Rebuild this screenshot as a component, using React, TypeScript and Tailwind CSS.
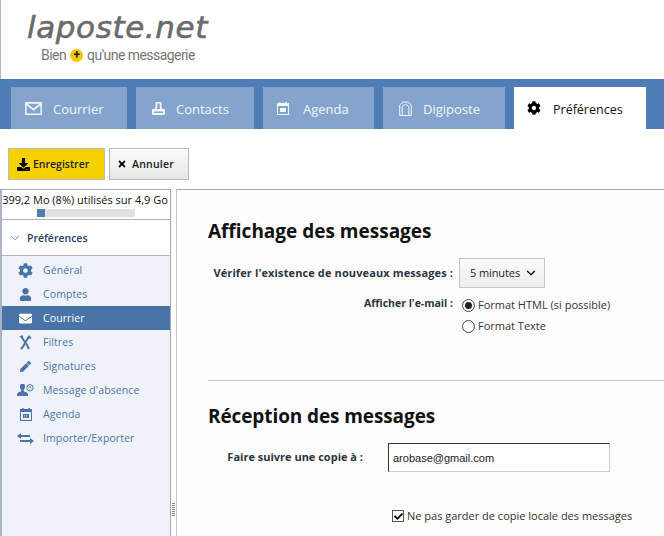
import React from "react";
import { LuChevronDown } from "react-icons/lu";
import { FaCog, FaUser, FaEnvelope, FaPen, FaDownload, FaTimes, FaCheck } from "react-icons/fa";

const sans = "font-['Open_Sans','Noto_Sans',sans-serif]";

function MailIcon({ className = "" }: { className?: string }) {
  return (
    <svg viewBox="0 0 18 14" className={className}>
      <path fillRule="evenodd" fill="currentColor" d="M0 0h18v14H0zM2.500 1.800 9 7l6.500-5.200zM1.600 3.400v8.900h14.800V3.400L9 9.300z" />
    </svg>
  );
}
function ContactIcon({ className = "" }: { className?: string }) {
  return (
    <svg viewBox="0 0 13 13" className={className}>
      <path fillRule="evenodd" fill="currentColor" d="M4.500 0h4a1 1 0 0 1 1 1v4l.8 2H12a1 1 0 0 1 1 1v4a1 1 0 0 1-1 1H1a1 1 0 0 1-1-1V8a1 1 0 0 1 1-1h1.700l.8-2V1a1 1 0 0 1 1-1zM5.300 1.600v3.600L4.600 7h3.800l-.7-1.800V1.600zM2 9.500v1.500h9V9.500z" />
    </svg>
  );
}
function CalIcon({ className = "" }: { className?: string }) {
  return (
    <svg viewBox="0 0 12 13" className={className}>
      <path fillRule="evenodd" fill="currentColor" d="M0 1h2V0h1.500v1h5V0H10v1h2v12H0zM1 4v8h10V4zM3 6h6v4H3z" />
      <path fill="#ffffff" opacity="0.6" d="M4 7h1v1H4zM6 7h1v1H6zM4 8.500h1v1H4zM6 8.500h1v1H6z" />
    </svg>
  );
}
function DigiIcon({ className = "" }: { className?: string }) {
  return (
    <svg viewBox="0 0 13 15" fill="none" stroke="currentColor" strokeWidth="1" className={className}>
      <path d="M.7 14.500V4L4 1h5l3.300 3v10.500z" />
      <path d="M3.200 14.500V5.500L6.500 3.200l3.300 2.300v9" />
    </svg>
  );
}
function FilterIcon({ className = "" }: { className?: string }) {
  return (
    <svg viewBox="0 0 13 15" className={className} fill="none" stroke="currentColor" strokeWidth="2">
      <path d="M2 14 4.500 11 6.500 7 9.500 2.500M2.500 1.500 4.500 5 8 10l2 4" />
      <path fill="currentColor" stroke="none" d="M10 0l3 3.500H7.500zM0 1.500 3.500 0l.5 3.500z" />
    </svg>
  );
}
function AbsenceIcon({ className = "" }: { className?: string }) {
  return (
    <svg viewBox="0 0 17 12" className={className}>
      <path fill="currentColor" d="M4 0h3c.6 0 1 1.200 1 3 0 2-1.300 2.800-1.300 3.800C6.700 8 11 8 11 10.500V12H0v-1.500C0 8 4.300 8 4.300 6.800 4.300 5.800 3 5 3 3c0-1.800.4-3 1-3z" />
      <circle cx="13" cy="3.800" r="3.200" fill="none" stroke="currentColor" strokeWidth="1" />
      <path d="M13 1.800v2.200h1.600" fill="none" stroke="currentColor" strokeWidth="0.800" />
    </svg>
  );
}
function SwapIcon({ className = "" }: { className?: string }) {
  return (
    <svg viewBox="0 0 17 11" className={className}>
      <path fill="currentColor" d="M4 0v2h9v2H4v2L0 3zM13 5v2H3v2h10v2l4-3z" />
    </svg>
  );
}

const tabs = [
  { label: "Courrier", icon: <MailIcon className="w-[17px] h-[13px]" />, w: "w-[116px]", gap: "gap-[11px]", pl: "pl-[14px]" },
  { label: "Contacts", icon: <ContactIcon className="w-[13px] h-[13px]" />, w: "w-[118px]", gap: "gap-[11px]", pl: "pl-[16px]" },
  { label: "Agenda", icon: <CalIcon className="w-[12px] h-[13px]" />, w: "w-[111px]", gap: "gap-[14px]", pl: "pl-[14px]" },
  { label: "Digiposte", icon: <DigiIcon className="w-[13px] h-[15px]" />, w: "w-[122px]", gap: "gap-[11px]", pl: "pl-[16px]" },
];

const items = [
  { label: "Général", icon: <FaCog className="w-[15px] h-[15px]" /> },
  { label: "Comptes", icon: <FaUser className="w-[13px] h-[13px]" /> },
  { label: "Courrier", icon: <FaEnvelope className="w-[13px] h-[13px]" />, active: true },
  { label: "Filtres", icon: <FilterIcon className="w-[13px] h-[15px]" /> },
  { label: "Signatures", icon: <FaPen className="w-[11px] h-[11px]" /> },
  { label: "Message d'absence", icon: <AbsenceIcon className="w-[17px] h-[12px]" /> },
  { label: "Agenda", icon: <CalIcon className="w-[12px] h-[13px]" /> },
  { label: "Importer/Exporter", icon: <SwapIcon className="w-[17px] h-[11px]" /> },
];

export default function App() {
  return (
    <div className={`w-[664px] h-[536px] overflow-hidden bg-white flex flex-col ${sans}`}>
      <header className="h-[79px] shrink-0 pl-[26px] pt-[9px] border-l border-l-[#a9bbd3]">
        <div className="font-['DejaVu_Sans',sans-serif] italic text-[31px] leading-[36px] tracking-[0.6px] text-[#6b6b6b] [-webkit-text-stroke:0.6px_#6b6b6b]">laposte.net</div>
        <div className="flex items-center pl-[14px] mt-[2px] font-['Roboto',sans-serif] text-[14px] leading-[16px] text-[#777] tracking-[-0.55px]">
          <span>Bien</span>
          <span className="mx-[4px] w-[13px] h-[13px] rounded-full bg-[#f4c800] flex items-center justify-center text-[#222] font-bold text-[12px] leading-none">+</span>
          <span>qu'une messagerie</span>
        </div>
      </header>

      <nav className="h-[50px] shrink-0 bg-[#4f7db5] flex items-end pl-[11px] gap-[9px]">
        {tabs.map((t) => (
          <div key={t.label} className={`${t.w} ${t.pl} ${t.gap} h-[42px] bg-[#84a4cd] text-[#f2f6fb] flex items-center text-[13px]`}>
            {t.icon}
            <span className="pt-[4px]">{t.label}</span>
          </div>
        ))}
        <div className="w-[132px] h-[42px] bg-white text-[#111] flex items-center pl-[13px] gap-[12px] text-[12.500px]">
          <FaCog className="w-[14px] h-[14px] text-black" />
          <span className="pt-[4px]">Préférences</span>
        </div>
      </nav>

      <div className="h-[60px] shrink-0 flex items-start pt-[19px] pl-[8px] gap-[4px]">
        <button className="w-[97px] h-[32px] border border-[#bbb] bg-[#f5d200] flex items-center pl-[8px] gap-[3px] text-[10.500px] font-semibold text-[#222]">
          <FaDownload className="w-[13px] h-[13px] text-black" />
          <span className="pt-[2px]">Enregistrer</span>
        </button>
        <button className="w-[80px] h-[32px] border border-[#bbb] bg-gradient-to-b from-[#fbfbfb] to-[#e6e8e8] flex items-center pl-[7px] gap-[5px] text-[10.500px] tracking-[0.2px] font-semibold text-[#222]">
          <FaTimes className="w-[10px] h-[10px] text-black" />
          <span className="pt-[2px]">Annuler</span>
        </button>
      </div>

      <div className="flex-1 flex min-h-0">
        <aside className="w-[171px] shrink-0 border-t border-t-[#aaa] border-r border-r-[#a8a8a8] border-l-2 border-l-[#a9b4c4] flex flex-col">
          <div className="h-[30px] shrink-0 border-b border-b-[#b4b4b4] flex flex-col items-center">
            <div className="text-[11px] leading-[15px] pt-[2px] pr-[2px] text-[#111] whitespace-nowrap">399,2 Mo (8%) utilisés sur 4,9 Go</div>
            <div className="w-[98px] h-[8px] bg-[#e0e2e2] mt-[2px]">
              <div className="w-[8px] h-[8px] bg-[#4f7db5]" />
            </div>
          </div>
          <div className="h-[36px] shrink-0 border-b border-b-[#b4b4b4] flex items-center pl-[6px] gap-[5px] text-[10.500px] font-semibold text-[#27406a]">
            <LuChevronDown className="w-[14px] h-[14px] text-[#4f7db5]" strokeWidth={1.5} />
            <span className="pt-[2px]">Préférences</span>
          </div>
          <ul className="flex-1 bg-[#eff3f9] pt-[2px]">
            {items.map((i) => (
              <li key={i.label} className={`h-[24px] flex items-center text-[10.500px] tracking-[0.1px] ${i.active ? "bg-[#4a74a8] text-white" : "text-[#4a74a8]"}`}>
                <span className="w-[41px] shrink-0 flex justify-center pl-[6px]">{i.icon}</span>
                <span className="pt-[2px]">{i.label}</span>
              </li>
            ))}
          </ul>
        </aside>

        <div className="w-[5px] shrink-0 flex items-end justify-center pb-[19px]">
          <div className="w-[3px] h-[14px] bg-[repeating-linear-gradient(#888_0,#888_1px,transparent_1px,transparent_2px)]" />
        </div>

        <main className="flex-1 border-t border-t-[#aaa] border-l border-l-[#c8c8c8] bg-[#fdfdfd] pt-[29px] min-w-0">
          <h2 className="pl-[31px] text-[19px] leading-[24px] font-bold text-[#111]">Affichage des messages</h2>

          <div className="flex items-center mt-[15px] h-[30px]">
            <div className="w-[276px] text-right text-[11px] tracking-[0.12px] font-bold text-[#2c3440] whitespace-nowrap">Vérifer l'existence de nouveaux messages :</div>
            <div className="ml-[6px] w-[86px] h-[30px] border border-[#c4c4c4] bg-gradient-to-b from-[#fafafa] to-[#eceded] flex items-center pl-[10px] gap-[4px] text-[11px] tracking-[-0.1px] text-[#222]">
              5 minutes
              <LuChevronDown className="w-[14px] h-[14px] text-black" />
            </div>
          </div>

          <div className="flex mt-[7px]">
            <div className="w-[276px] text-right text-[10.500px] font-bold text-[#2c3440] leading-[16px]">Afficher l'e-mail :</div>
            <div className="ml-[9px] mt-[2px] flex flex-col gap-[5px] text-[11px] text-[#333]">
              <div className="flex items-center h-[16px] gap-[3px]">
                <span className="w-[13px] h-[13px] rounded-full border border-[#444] bg-white flex items-center justify-center">
                  <span className="w-[7px] h-[7px] rounded-full bg-[#222]" />
                </span>
                Format HTML (si possible)
              </div>
              <div className="flex items-center h-[16px] gap-[3px]">
                <span className="w-[13px] h-[13px] rounded-full border border-[#444] bg-white" />
                Format Texte
              </div>
            </div>
          </div>

          <div className="h-px bg-[#c8c8c8] ml-[31px] mt-[46px]" />

          <h2 className="pl-[31px] mt-[23px] text-[19px] tracking-[-0.1px] leading-[24px] font-bold text-[#111]">Réception des messages</h2>

          <div className="flex items-center mt-[15px]">
            <div className="w-[186px] text-right text-[11px] font-bold text-[#2c3440] whitespace-nowrap">Faire suivre une copie à :</div>
            <input
              readOnly
              value="arobase@gmail.com"
              className="ml-[25px] w-[222px] h-[29px] px-[4px] bg-white border border-[#ccc] border-t-[#333] border-l-[#333] font-['Liberation_Sans',sans-serif] text-[11px] text-[#222] outline-none"
            />
          </div>

          <div className="flex items-center mt-[36px] pl-[215px] gap-[3px] text-[11px] text-[#333]">
            <span className="w-[12px] h-[12px] border border-[#555] bg-white flex items-center justify-center">
              <FaCheck className="w-[9px] h-[9px] text-black" />
            </span>
            Ne pas garder de copie locale des messages
          </div>
        </main>
      </div>
    </div>
  );
}
